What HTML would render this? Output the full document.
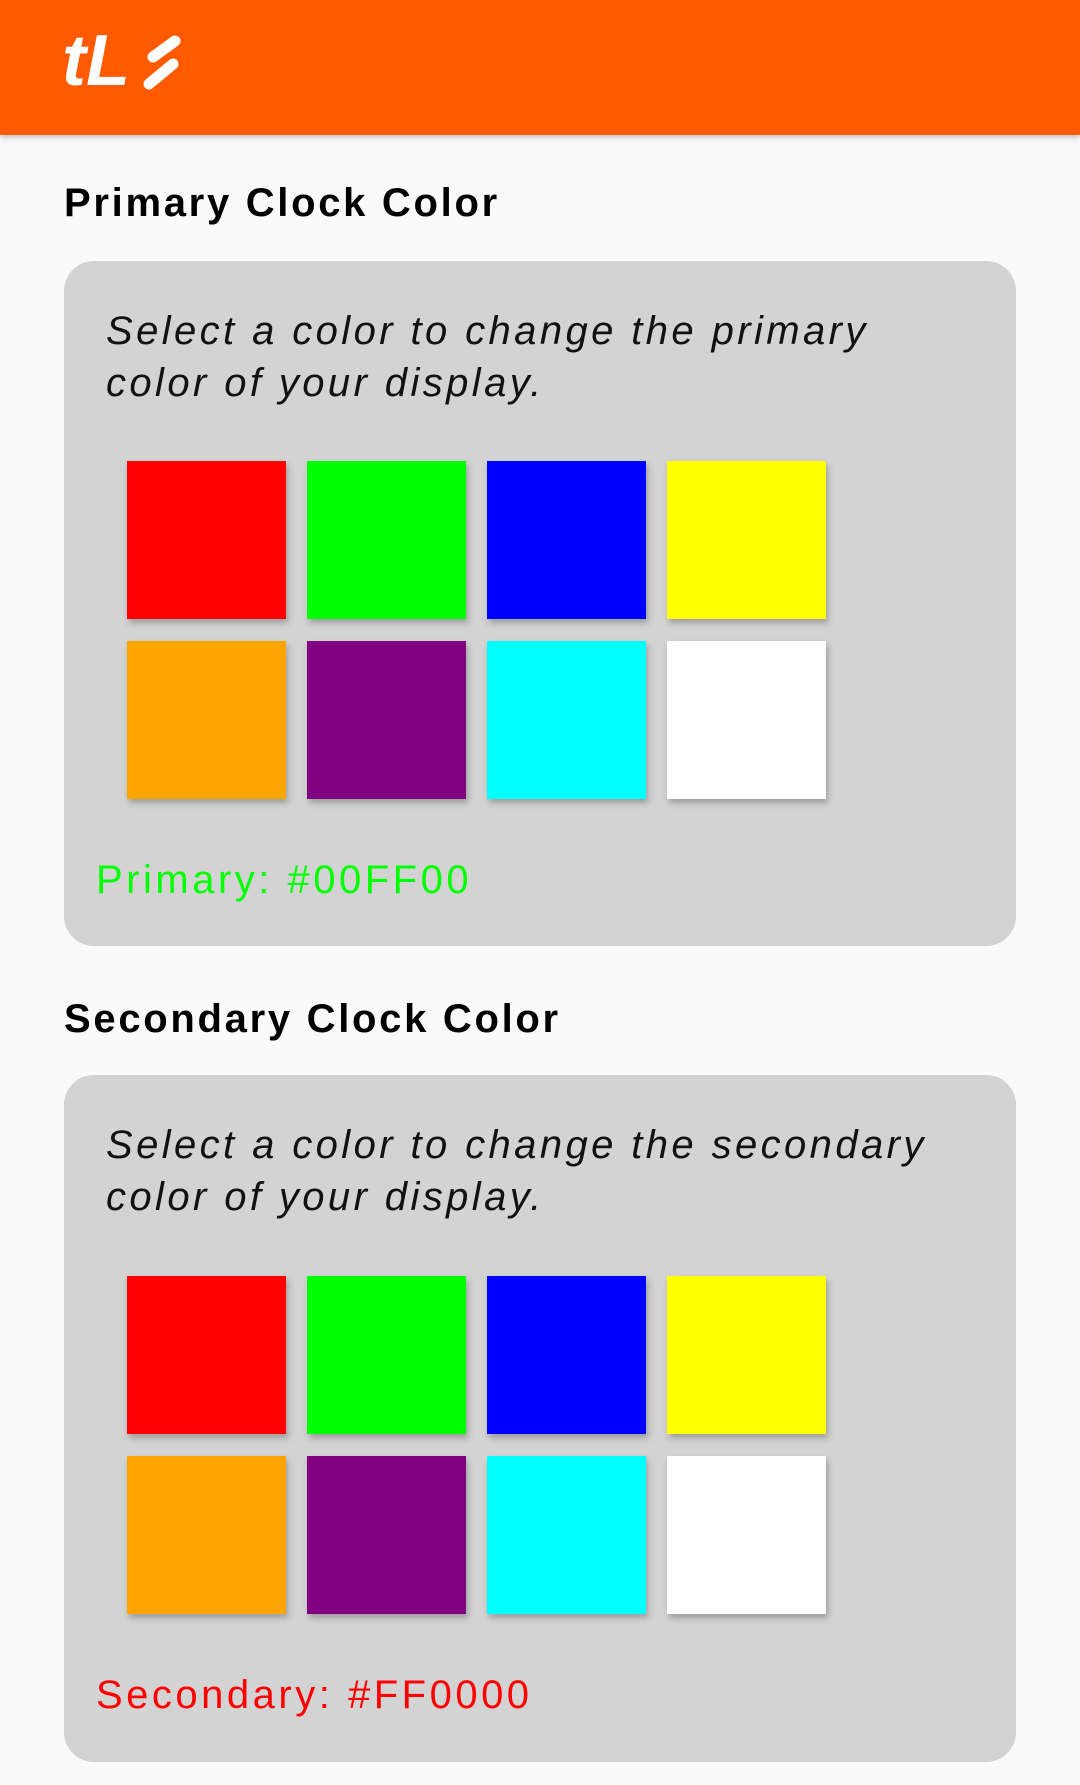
<!DOCTYPE html>
<html><head><meta charset="utf-8"><style>
body{margin:0;width:1080px;height:1785px;background:#fafafa;font-family:"Liberation Sans",sans-serif;position:relative;overflow:hidden}
.hdr{position:absolute;left:0;top:0;width:1080px;height:135px;background:#ff5a00;box-shadow:0 2px 6px rgba(0,0,0,.25)}
.logo{position:absolute;left:62px;top:20px;color:#fff;font:italic bold 72px "Liberation Sans",sans-serif;letter-spacing:0}
h2{position:absolute;left:64px;margin:0;font-size:40px;font-weight:bold;color:#000;line-height:48px;letter-spacing:2.7px}
.card{position:absolute;left:64px;width:952px;background:#d3d3d3;border-radius:30px}
.desc{position:absolute;left:42px;top:44px;font-style:italic;font-size:40px;line-height:52px;color:#111;margin:0;letter-spacing:3.4px;white-space:nowrap}
.sw{position:absolute;width:159px;height:158px;box-shadow:2px 4px 6px rgba(0,0,0,.25)}
.lbl{position:absolute;left:32px;font-size:40px;line-height:48px;letter-spacing:3.5px}
</style></head><body>
<div class="hdr"><div class="logo">tL</div>
<svg style="position:absolute;left:140px;top:34px" width="50" height="60"><path d="M35 7 L13 23 M33 30 L9 50" fill="none" stroke="#fff" stroke-width="11" stroke-linecap="round"/></svg>
</div>
<h2 style="top:179px">Primary Clock Color</h2>
<div class="card" style="top:261px;height:685px">
<p class="desc">Select a color to change the primary<br>color of your display.</p>
<div class="sw" style="left:63px;top:200px;background:#f00"></div>
<div class="sw" style="left:243px;top:200px;background:#0f0"></div>
<div class="sw" style="left:423px;top:200px;background:#00f"></div>
<div class="sw" style="left:603px;top:200px;background:#ff0"></div>
<div class="sw" style="left:63px;top:380px;background:#ffa500"></div>
<div class="sw" style="left:243px;top:380px;background:#800080"></div>
<div class="sw" style="left:423px;top:380px;background:#0ff"></div>
<div class="sw" style="left:603px;top:380px;background:#fff"></div>
<div class="lbl" style="top:595px;color:#0f0">Primary: #00FF00</div>
</div>
<h2 style="top:995px">Secondary Clock Color</h2>
<div class="card" style="top:1075px;height:687px">
<p class="desc">Select a color to change the secondary<br>color of your display.</p>
<div class="sw" style="left:63px;top:201px;background:#f00"></div>
<div class="sw" style="left:243px;top:201px;background:#0f0"></div>
<div class="sw" style="left:423px;top:201px;background:#00f"></div>
<div class="sw" style="left:603px;top:201px;background:#ff0"></div>
<div class="sw" style="left:63px;top:381px;background:#ffa500"></div>
<div class="sw" style="left:243px;top:381px;background:#800080"></div>
<div class="sw" style="left:423px;top:381px;background:#0ff"></div>
<div class="sw" style="left:603px;top:381px;background:#fff"></div>
<div class="lbl" style="top:596px;color:#f00">Secondary: #FF0000</div>
</div>
</body></html>
